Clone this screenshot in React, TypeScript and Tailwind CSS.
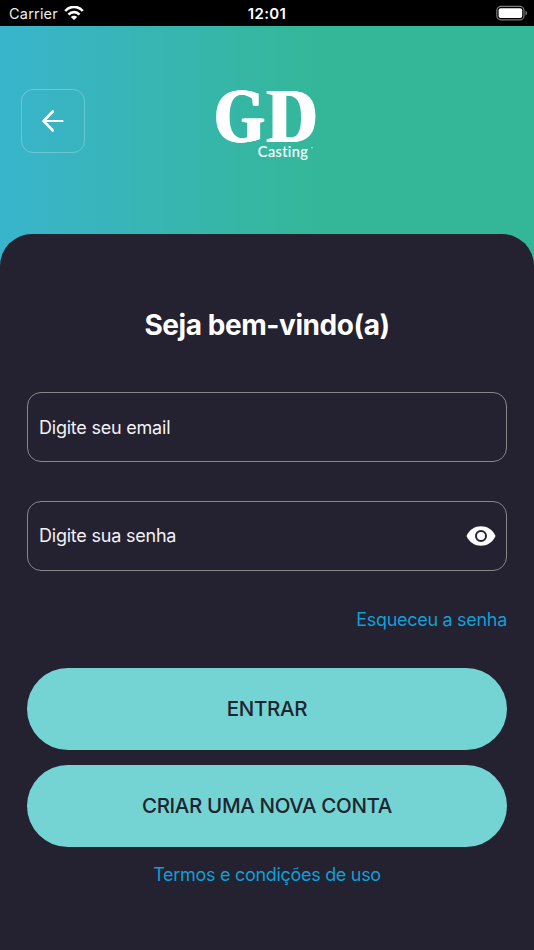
const font = "font-['Inter','Liberation_Sans',sans-serif]";

function StatusBar() {
  return (
    <div className="grid h-[26px] grid-cols-[1fr_60px_1fr] items-center bg-black text-white">
      <div className="flex items-center gap-[6px] pl-[9px] pt-px">
        <span className="text-[14.5px] leading-[24px] tracking-[0.2px] text-[#ececec]">Carrier</span>
        <svg width="20" height="15" viewBox="0 0 20 15" fill="none" stroke="#fff" strokeWidth="2.6">
          <path d="M1.2 5C6-.5 14-.5 18.8 5" />
          <path d="M4.5 8.6C7.5 5.3 12.5 5.3 15.5 8.6" />
          <path d="M10 14L6.8 10.9C8.5 9.2 11.5 9.2 13.2 10.9Z" fill="#fff" stroke="none" />
        </svg>
      </div>
      <span className="pt-[2px] text-center text-[15px] font-semibold leading-[24px] tracking-[0.4px]">12:01</span>
      <svg className="mr-[6px] justify-self-end" width="32" height="16" viewBox="0 0 32 16">
        <rect x="0.8" y="1.4" width="27.2" height="13.4" rx="4" fill="none" stroke="#7b7b7b" strokeWidth="1.2" />
        <rect x="2.6" y="3.3" width="23.6" height="9.6" rx="2" fill="#fff" />
        <path d="M29.5 5.8C31.6 6.6 31.6 9.6 29.5 10.4Z" fill="#7b7b7b" />
      </svg>
    </div>
  );
}

function Logo() {
  return (
    <svg className="overflow-visible" width="106" height="76" viewBox="0 0 106 76" fill="#fff">
      {/* Horizontal shadows thicken the stems and keep the hairlines thin */}
      <g
        className="[filter:drop-shadow(1px_0_0_#fff)_drop-shadow(2px_0_0_#fff)]"
        fontFamily="'Liberation Serif', serif"
        fontWeight="700"
        fontSize="78.5"
      >
        <text x="-0.9" y="55.8" textLength="50" lengthAdjust="spacingAndGlyphs">G</text>
        <text x="51.6" y="55.8" textLength="50.3" lengthAdjust="spacingAndGlyphs">D</text>
      </g>
      <text
        className="[font-variant-ligatures:none]"
        x="43.8"
        y="71"
        fontFamily="Lato, sans-serif"
        fontWeight="400"
        fontSize="14.5"
        stroke="#fff"
        strokeWidth="0.2"
        textLength="50"
        lengthAdjust="spacing"
      >
        Casting
      </text>
      <circle cx="98" cy="61.8" r="0.8" opacity="0.7" />
    </svg>
  );
}

function Field({ label, children }: { label: string; children?: React.ReactNode }) {
  return (
    <div className="flex h-[70px] items-center justify-between rounded-[14px] border border-[#88868b] pl-[11px] pr-[10px] text-[18px] tracking-[-0.22px] text-[#f3f3f4]">
      <span className={children ? "pb-px" : ""}>{label}</span>
      {children}
    </div>
  );
}

export default function App() {
  return (
    <div className={`flex h-[950px] w-[534px] flex-col overflow-hidden bg-[#242131] ${font}`}>
      <StatusBar />
      <div className="flex flex-1 flex-col bg-[linear-gradient(90deg,#39b4cc_0%,#34b798_60%)]">
        <header className="grid h-[208px] grid-cols-[1fr_106px_1fr] items-start px-[21px]">
          <button className="mt-[63px] flex size-[64px] items-center justify-center rounded-[12px] border border-white/25">
            <svg width="24" height="24" viewBox="0 0 24 24" fill="none" stroke="#fff" strokeLinecap="round" strokeLinejoin="round">
              <path d="M11.8 2.5L2.6 12L11.8 21.5" strokeWidth="2.6" />
              <path d="M3 12H21.5" strokeWidth="2.2" />
            </svg>
          </button>
          <div className="mt-[60px]">
            <Logo />
          </div>
        </header>
        <main className="flex flex-1 flex-col rounded-t-[32px] bg-[#242131] px-[27px]">
          <h1 className="mt-[73px] text-center text-[28px] font-bold leading-[36px] tracking-[-0.43px] text-white">Seja bem-vindo(a)</h1>
          <div className="mt-[49px]">
            <Field label="Digite seu email" />
          </div>
          <div className="mt-[39px]">
            <Field label="Digite sua senha">
              <svg width="30" height="20" viewBox="0 0 30 20">
                <path d="M.5 10C6-3 24-3 29.5 10C24 23 6 23 .5 10Z" fill="#fff" />
                <circle cx="15" cy="10" r="5" fill="none" stroke="#242131" strokeWidth="2" />
              </svg>
            </Field>
          </div>
          <a className="mt-[37px] self-end text-[18px] leading-[24px] tracking-[-0.3px] text-[#109fd6]">Esqueceu a senha</a>
          <button className="mt-[36px] h-[82px] rounded-full bg-[#74d4d3] pt-px text-[20.5px] font-medium tracking-[-0.35px] text-[#1f2530]">ENTRAR</button>
          <button className="mt-[15px] h-[82px] rounded-full bg-[#74d4d3] text-[20.5px] font-medium tracking-[-0.35px] text-[#1f2530]">CRIAR UMA NOVA CONTA</button>
          <a className="mt-[16px] self-center text-[18px] leading-[24px] tracking-[-0.3px] text-[#109fd6]">Termos e condições de uso</a>
        </main>
      </div>
    </div>
  );
}
